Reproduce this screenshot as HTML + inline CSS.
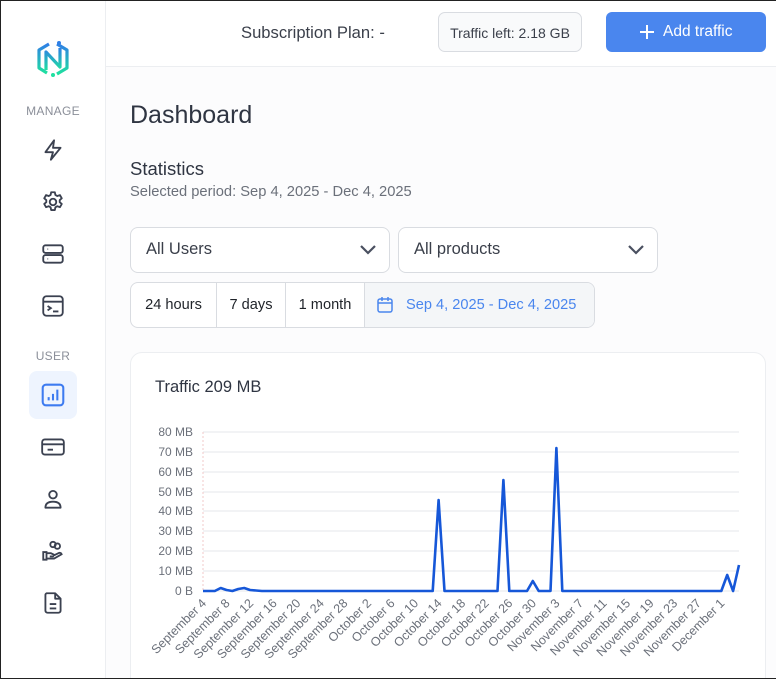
<!DOCTYPE html>
<html><head><meta charset="utf-8"><style>
*{box-sizing:border-box;margin:0;padding:0}
html,body{width:776px;height:679px;overflow:hidden}
body{font-family:"Liberation Sans",sans-serif;background:#fcfcfd;position:relative;color:#2f3542}
.frame{position:absolute;left:0;top:0;width:776px;height:679px;border-left:1px solid #222;border-top:1px solid #222;border-bottom:1px solid #222;pointer-events:none;z-index:9}
.side{position:absolute;left:0;top:0;width:106px;height:679px;background:#fff;border-right:1px solid #eceef1}
.lbl{position:absolute;width:106px;text-align:center;font-size:12px;color:#8b8f99;letter-spacing:.3px}
.ic{position:absolute;left:40px;width:26px;height:26px}
.hdr{position:absolute;left:106px;top:0;right:0;height:67px;background:#fff;border-bottom:1px solid #eceef1}
.abs{position:absolute}
.sel{position:absolute;top:227px;height:46px;background:#fff;border:1px solid #d9dce1;border-radius:8px;font-size:16.5px;color:#3a3f4a;padding:12px 0 0 15px}
.sel svg{position:absolute;right:11px;top:15px}
.grp{position:absolute;left:130px;top:282px;width:465px;height:46px;border:1px solid #d9dce1;border-radius:8px;background:#fff;overflow:hidden;font-size:14.6px;color:#1f2329}
.grp div{position:absolute;top:0;height:44px;line-height:44px;text-align:center;border-right:1px solid #d9dce1}
.card{position:absolute;left:130px;top:352px;width:636px;height:340px;background:#fff;border:1px solid #eceef1;border-radius:12px}
</style></head><body>
<div class="side">
<svg class="abs" style="left:35px;top:39px" width="36" height="40" viewBox="0 0 36 40">
<defs><linearGradient id="g" x1="0" y1="0" x2="0" y2="1"><stop offset="0" stop-color="#2f7fe6"/><stop offset="1" stop-color="#1fe0a0"/></linearGradient></defs>
<g fill="none" stroke="url(#g)" stroke-width="3.2" stroke-linejoin="round">
<path d="M14 5 L4 11 V29 L12 34"/><path d="M22 5 L32 11 V29 L22 35"/>
<path d="M11 31 V13 L25 28 V9"/></g>
<circle cx="24" cy="4" r="2" fill="#2f7fe6"/><circle cx="18" cy="36" r="2" fill="#1fe0a0"/>
</svg>
<div class="lbl" style="top:104px">MANAGE</div>
<svg class="ic" style="top:137px" viewBox="0 0 24 24" fill="none" stroke="#3b4150" stroke-width="1.7" stroke-linejoin="round"><path d="M13 3 L5 14 H12 L10 21 L19 10 H12 Z"/></svg>
<svg class="ic" style="top:189px" viewBox="0 0 24 24" fill="none" stroke="#3b4150" stroke-width="1.7"><path d="M10.3 3h3.4l.5 2.5 1.8 1 2.4-.9 1.7 3-1.9 1.6v2l1.9 1.6-1.7 3-2.4-.9-1.8 1-.5 2.5h-3.4l-.5-2.5-1.8-1-2.4.9-1.7-3 1.9-1.6v-2L3.9 8.6l1.7-3 2.4.9 1.8-1z" stroke-linejoin="round"/><circle cx="12" cy="12" r="3"/></svg>
<svg class="ic" style="top:241px" viewBox="0 0 24 24" fill="none" stroke="#3b4150" stroke-width="1.7"><rect x="3" y="4" width="18" height="7" rx="2"/><rect x="3" y="13" width="18" height="7" rx="2"/><path d="M7 7.5h.5M7 16.5h.5"/></svg>
<svg class="ic" style="top:293px" viewBox="0 0 24 24" fill="none" stroke="#3b4150" stroke-width="1.7"><rect x="3" y="3" width="18" height="18" rx="3"/><path d="M3 8h18M7 12l3 2-3 2M12 17h5"/></svg>
<div class="lbl" style="top:349px">USER</div>
<div class="abs" style="left:29px;top:371px;width:48px;height:48px;background:#eef4fe;border-radius:8px"></div>
<svg class="ic" style="top:382px" viewBox="0 0 24 24" fill="none" stroke="#3d7bf0" stroke-width="1.9"><rect x="2.5" y="2.5" width="19" height="19" rx="3"/><path d="M8 17v-3M12 17v-6M16 17V7"/></svg>
<svg class="ic" style="top:434px" viewBox="0 0 24 24" fill="none" stroke="#3b4150" stroke-width="1.7"><rect x="2" y="5" width="20" height="14" rx="2.5"/><path d="M2 9.5h20M7 14.5h5"/></svg>
<svg class="ic" style="top:486px" viewBox="0 0 24 24" fill="none" stroke="#3b4150" stroke-width="1.7"><circle cx="12" cy="8" r="3.5"/><path d="M5 20c0-4 3-5.5 7-5.5s7 1.5 7 5.5z" stroke-linejoin="round"/></svg>
<svg class="ic" style="top:538px" viewBox="0 0 24 24" fill="none" stroke="#3b4150" stroke-width="1.7"><circle cx="12" cy="6" r="2.5"/><circle cx="16" cy="7.5" r="2.5"/><path d="M3 13h3v7H3zM6 14h4l3 1.5-1 1.5h-3M6 19h7l7-4c-.5-1.5-2-1.5-3-1l-4 2"/></svg>
<svg class="ic" style="top:590px" viewBox="0 0 24 24" fill="none" stroke="#3b4150" stroke-width="1.7" stroke-linejoin="round"><path d="M6 3h8l5 5v11a2 2 0 0 1-2 2H7a2 2 0 0 1-2-2V5a2 2 0 0 1 1-2z"/><path d="M14 3v5h5M9 13h6M9 17h6"/></svg>
</div>
<div class="hdr"></div>
<div class="abs" style="left:241px;top:23px;font-size:16.6px;color:#3a3f4a">Subscription Plan: -</div>
<div class="abs" style="left:438px;top:12px;width:144px;height:40px;border:1px solid #d9dce1;border-radius:7px;background:#f9fafb;font-size:14px;color:#3a3f4a;line-height:40px;text-align:center">Traffic left: 2.18 GB</div>
<div class="abs" style="left:606px;top:12px;width:160px;height:40px;background:#4a86ee;border-radius:6px;color:#fff;font-size:15.5px;line-height:40px;padding-left:57px">Add traffic</div>
<svg class="abs" style="left:639px;top:24px" width="16" height="16"><path d="M8 1v14M1 8h14" stroke="#fff" stroke-width="2"/></svg>
<div class="abs" style="left:130px;top:101px;font-size:25px;color:#2f3542">Dashboard</div>
<div class="abs" style="left:130px;top:158px;font-size:18.5px;color:#2f3542">Statistics</div>
<div class="abs" style="left:130px;top:184px;font-size:14.7px;color:#6b707a">Selected period: Sep 4, 2025 - Dec 4, 2025</div>
<div class="sel" style="left:130px;width:260px">All Users<svg width="20" height="14"><path d="M3 3l7 7 7-7" fill="none" stroke="#4a5060" stroke-width="2.2"/></svg></div>
<div class="sel" style="left:398px;width:260px">All products<svg width="20" height="14"><path d="M3 3l7 7 7-7" fill="none" stroke="#4a5060" stroke-width="2.2"/></svg></div>
<div class="grp">
<div style="left:0;width:86px">24 hours</div>
<div style="left:86px;width:69px">7 days</div>
<div style="left:155px;width:79px">1 month</div>
<div style="left:234px;width:231px;background:#f4f6f8;border:none;color:#4a86ee;text-align:left;padding-left:41px">Sep 4, 2025 - Dec 4, 2025</div>
</div>
<svg class="abs" style="left:376px;top:296px" width="18" height="18" viewBox="0 0 18 18" fill="none" stroke="#4a86ee" stroke-width="1.5"><rect x="2" y="3" width="14" height="13" rx="2"/><path d="M2 7h14M6 1v4M12 1v4"/></svg>
<div class="card"></div>
<div class="abs" style="left:155px;top:378px;font-size:16.5px;color:#2f3542">Traffic 209 MB</div>
<svg class="abs" style="left:0;top:0" width="776" height="679" font-family="Liberation Sans" font-size="12.5" fill="#6b707a">
<g stroke="#e5e7eb" stroke-width="1">
<path d="M203 432H739M203 452H739M203 472H739M203 492H739M203 511H739M203 531H739M203 551H739M203 571H739M203 591H739"/></g>
<path d="M203 432V591" stroke="#f0c8c8" stroke-dasharray="2 2"/>
<g text-anchor="end" font-size="12"><text x="193" y="436">80 MB</text><text x="193" y="456">70 MB</text><text x="193" y="476">60 MB</text><text x="193" y="496">50 MB</text><text x="193" y="515">40 MB</text><text x="193" y="535">30 MB</text><text x="193" y="555">20 MB</text><text x="193" y="575">10 MB</text><text x="193" y="595">0 B</text></g>
<polyline fill="none" stroke="#1657d8" stroke-width="2.6" stroke-linejoin="round" points="203,591 214.8,591 220.7,588 226.5,590 232.4,591 238.3,589 244.2,588 250.1,590 256,590.5 261.9,591 432.7,591 438.6,500 444.5,591 497.5,591 503.4,480 509.3,591 527,591 532.8,581 538.7,591 550.5,591 556.4,448 562.3,591 721.3,591 727.2,575 733.1,591 739,565"/>
<g text-anchor="end">
<text transform="translate(207,604) rotate(-45)">September 4</text>
<text transform="translate(230.6,604) rotate(-45)">September 8</text>
<text transform="translate(254.2,604) rotate(-45)">September 12</text>
<text transform="translate(277.7,604) rotate(-45)">September 16</text>
<text transform="translate(301.3,604) rotate(-45)">September 20</text>
<text transform="translate(324.8,604) rotate(-45)">September 24</text>
<text transform="translate(348.4,604) rotate(-45)">September 28</text>
<text transform="translate(372,604) rotate(-45)">October 2</text>
<text transform="translate(395.5,604) rotate(-45)">October 6</text>
<text transform="translate(419.1,604) rotate(-45)">October 10</text>
<text transform="translate(442.6,604) rotate(-45)">October 14</text>
<text transform="translate(466.2,604) rotate(-45)">October 18</text>
<text transform="translate(489.7,604) rotate(-45)">October 22</text>
<text transform="translate(513.3,604) rotate(-45)">October 26</text>
<text transform="translate(536.9,604) rotate(-45)">October 30</text>
<text transform="translate(560.4,604) rotate(-45)">November 3</text>
<text transform="translate(584,604) rotate(-45)">November 7</text>
<text transform="translate(607.5,604) rotate(-45)">November 11</text>
<text transform="translate(631.1,604) rotate(-45)">November 15</text>
<text transform="translate(654.6,604) rotate(-45)">November 19</text>
<text transform="translate(678.2,604) rotate(-45)">November 23</text>
<text transform="translate(701.8,604) rotate(-45)">November 27</text>
<text transform="translate(725.3,604) rotate(-45)">December 1</text>
</g>
</svg>
<div class="frame"></div>
</body></html>
